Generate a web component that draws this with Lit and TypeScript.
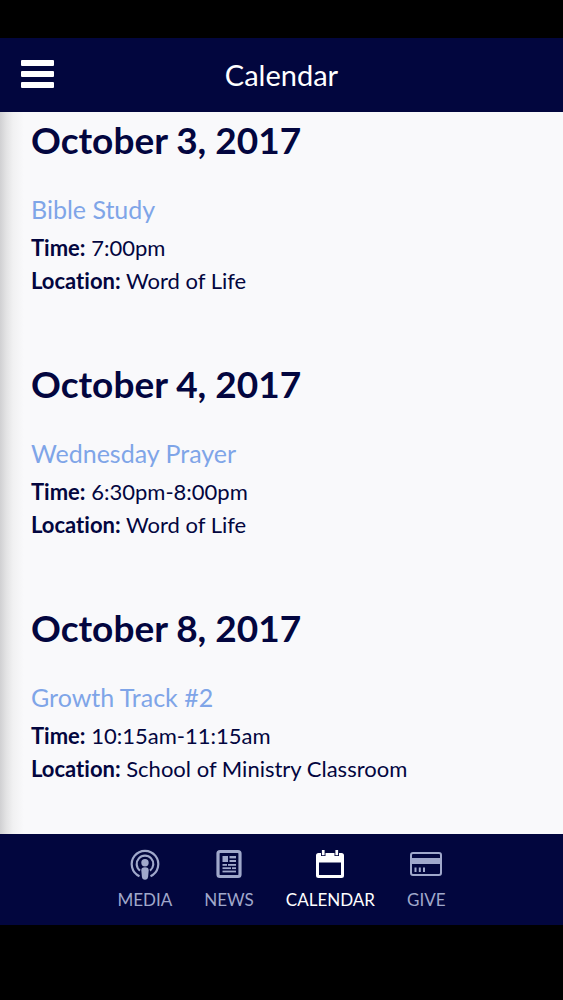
import { LitElement, html, css, svg, nothing } from "lit";
import { customElement, state } from "lit/decorators.js";

interface ChurchEvent {
  date: string;
  title: string;
  time: string;
  location: string;
}

const EVENTS: ChurchEvent[] = [
  { date: "October 3, 2017", title: "Bible Study", time: "7:00pm", location: "Word of Life" },
  { date: "October 4, 2017", title: "Wednesday Prayer", time: "6:30pm-8:00pm", location: "Word of Life" },
  { date: "October 8, 2017", title: "Growth Track #2", time: "10:15am-11:15am", location: "School of Ministry Classroom" },
];

// Every icon is drawn on a 32x32 grid in the current text colour.
const ICONS: Record<string, unknown> = {
  Media: svg`
    <g fill="none" stroke="currentColor" stroke-width="2.2">
      <path d="M10.5 28.2A13.3 13.3 0 1 1 21.5 28.2" />
      <path d="M11 22.6A8.3 8.3 0 1 1 21 22.6" />
    </g>
    <circle cx="16" cy="14.8" r="3.7" fill="currentColor" />
    <path d="M16 19.2c2.6 0 3.8 1.2 3.7 3.2l-.6 6.4c-.2 1.9-1.3 2.9-3.1 2.9s-2.9-1-3.1-2.9l-.6-6.4c-.1-2 1.1-3.2 3.7-3.2z" fill="currentColor" />`,
  News: svg`
    <rect x="5" y="3.5" width="22" height="25" rx="2" fill="none" stroke="currentColor" stroke-width="3.2" />
    <g fill="currentColor">
      <rect x="9.5" y="8" width="5.5" height="6" />
      <rect x="16.5" y="8" width="6.5" height="2.4" />
      <rect x="16.5" y="12" width="6.5" height="2" />
      <rect x="9.5" y="16" width="4.5" height="1.8" />
      <rect x="15" y="16" width="8" height="1.8" />
      <rect x="9.5" y="19.3" width="8.5" height="1.8" />
      <rect x="19" y="19.3" width="4" height="1.8" />
      <rect x="9.5" y="22.6" width="13.5" height="1.8" />
    </g>`,
  Calendar: svg`
    <path fill="currentColor" fill-rule="evenodd" d="M4.5 5H7v3h4.500V5h9v3H25V5h2.500Q30 5 30 7.500v20Q30 30 27.500 30h-23Q2 30 2 27.500v-20Q2 5 4.500 5zM5 14.500V27h22V14.500z" />
    <rect x="7.9" y="2" width="2.7" height="5.2" fill="currentColor" />
    <rect x="21.4" y="2" width="2.7" height="5.2" fill="currentColor" />`,
  Give: svg`
    <rect x="1" y="5" width="30" height="22" rx="2" fill="none" stroke="currentColor" stroke-width="2" />
    <g fill="currentColor">
      <rect x="1" y="10" width="30" height="6" />
      <rect x="4.5" y="19.5" width="2" height="4.5" />
      <rect x="8.8" y="19.5" width="2" height="4.5" />
      <rect x="13" y="19.5" width="2" height="4.5" />
    </g>`,
};

@customElement("event-entry")
class EventEntry extends LitElement {
  static properties = { event: { attribute: false } };
  declare event: ChurchEvent;

  static styles = css`
    :host {
      display: block;
    }
    .date {
      margin: 0 0 28px;
      font-size: 37px;
      line-height: 48px;
      font-weight: 700;
    }
    .title {
      display: block;
      margin-bottom: 5px;
      font-size: 25px;
      line-height: 34px;
      color: #7fa5e8;
      text-decoration: none;
    }
    .detail {
      margin: 0;
      font-size: 22px;
      line-height: 33px;
    }
  `;

  render() {
    const { date, title, time, location } = this.event;
    return html`
      <h2 class="date">${date}</h2>
      <a class="title" href="#event">${title}</a>
      <p class="detail"><strong>Time:</strong> ${time}</p>
      <p class="detail"><strong>Location:</strong> ${location}</p>
    `;
  }
}

@customElement("app-root")
class AppRoot extends LitElement {
  @state() private current = "Calendar";

  static styles = css`
    :host {
      display: flex;
      flex-direction: column;
      box-sizing: border-box;
      min-height: 100vh;
      padding: 38px 0 75px;
      background: #000;
      color: #03063f;
      font-family: Lato, sans-serif;
      font-variant-ligatures: none;
    }
    .bar {
      display: grid;
      grid-template-columns: 75px 1fr 75px;
      align-items: center;
      height: 74px;
      background: #02063e;
      color: #fff;
    }
    .menu {
      display: flex;
      justify-content: center;
      padding: 0 0 2px;
      border: 0;
      background: none;
      color: inherit;
      cursor: pointer;
    }
    .menu-icon {
      width: 33px;
      height: 28px;
    }
    .heading {
      margin: 0;
      font-size: 29px;
      line-height: 36px;
      font-weight: 400;
      text-align: center;
    }
    .events {
      flex: 1;
      display: flex;
      flex-direction: column;
      gap: 63px;
      padding: 4px 31px 0;
      background: linear-gradient(90deg, #d0d0d2 0, #e2e2e3 6px, #f1f1f2 13px, #f9f9fb 24px, #f9f9fb 100%);
    }
    .tabs {
      display: flex;
      justify-content: center;
      gap: 32px;
      box-sizing: border-box;
      height: 91px;
      padding-top: 14px;
      background: #02063e;
    }
    .tab {
      display: flex;
      flex-direction: column;
      align-items: center;
      gap: 8px;
      color: #a0a8cb;
      font-size: 17px;
      line-height: 24px;
      text-decoration: none;
      text-transform: uppercase;
    }
    .tab[aria-current] {
      color: #fff;
    }
    .tab-icon {
      width: 32px;
      height: 32px;
    }
  `;

  render() {
    return html`
      <header class="bar">
        <button class="menu" type="button" aria-label="Menu">
          <svg class="menu-icon" viewBox="0 0 33 28" fill="currentColor" aria-hidden="true">
            <rect width="33" height="6" y="0" rx="1" />
            <rect width="33" height="6" y="11" rx="1" />
            <rect width="33" height="6" y="22" rx="1" />
          </svg>
        </button>
        <h1 class="heading">Calendar</h1>
      </header>
      <main class="events">
        ${EVENTS.map((event) => html`<event-entry .event=${event}></event-entry>`)}
      </main>
      <nav class="tabs" aria-label="Sections">
        ${Object.entries(ICONS).map(
          ([name, icon]) => html`
            <a
              class="tab"
              href="#${name.toLowerCase()}"
              aria-current=${name === this.current ? "page" : nothing}
              @click=${() => (this.current = name)}
            >
              <svg class="tab-icon" viewBox="0 0 32 32" aria-hidden="true">${icon}</svg>
              <span>${name}</span>
            </a>
          `
        )}
      </nav>
    `;
  }
}
